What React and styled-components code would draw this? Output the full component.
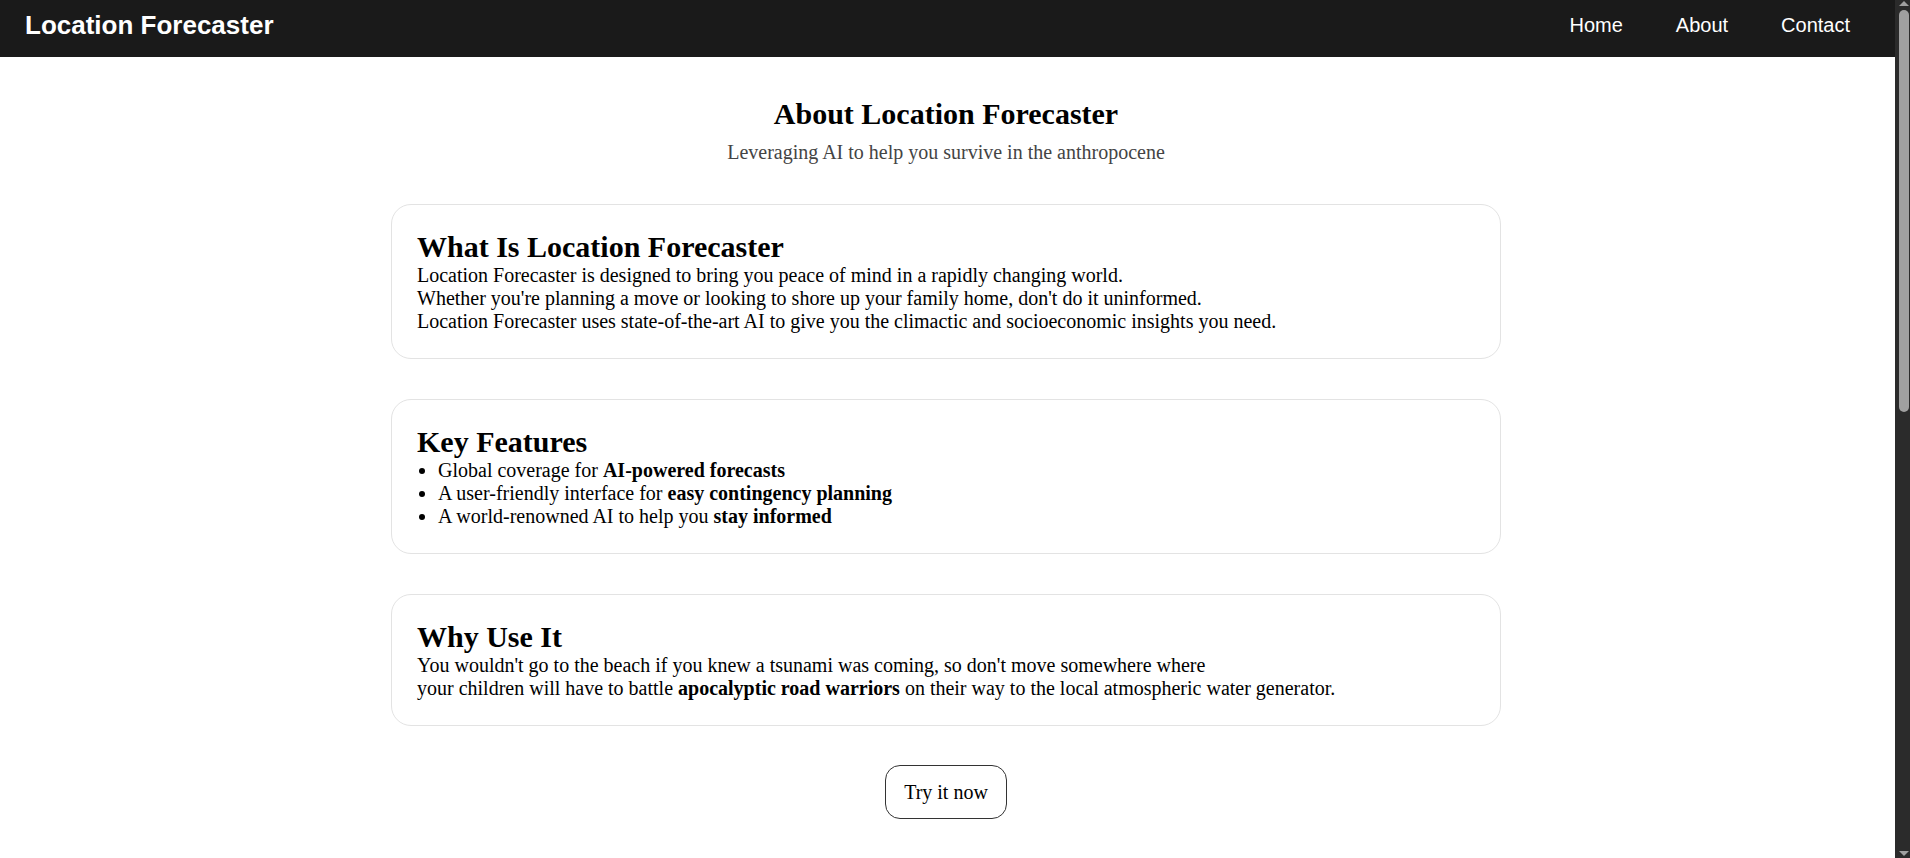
import React from 'react';
import styled, { createGlobalStyle } from 'styled-components';

const GlobalStyle = createGlobalStyle`
  html, body {
    margin: 0;
    height: 100%;
    overflow: hidden;
  }

  body {
    background: #ffffff;
    color: #000000;
    font-family: "Liberation Serif", "Times New Roman", serif;
  }
`;

const Shell = styled.div`
  display: flex;
  height: 100vh;
`;

const Page = styled.div`
  flex: 1;
  min-width: 0;
  min-height: 1767px;
  background: #ffffff;
`;

// dark window scrollbar seen at the right edge of the screenshot
const ScrollTrack = styled.div`
  position: relative;
  flex: 0 0 15px;
  height: 100vh;
  background: #2b2b2b;
`;

const ScrollThumb = styled.div`
  position: absolute;
  top: 10px;
  left: 4px;
  width: 10px;
  height: 402px;
  border-radius: 5px;
  background: #a0a0a0;
`;

const ScrollArrow = styled.div`
  position: absolute;
  left: 4px;
  width: 0;
  height: 0;
  border-left: 5px solid transparent;
  border-right: 5px solid transparent;
  ${(p) =>
    p.down
      ? 'bottom: 2px; border-top: 5px solid #a0a0a0;'
      : 'top: 1px; border-bottom: 5px solid #a0a0a0;'}
`;

const NavBar = styled.nav`
  display: flex;
  justify-content: space-between;
  align-items: center;
  height: 57px;
  box-sizing: border-box;
  padding: 0 45px 6px 25px;
  background: #1a1a1a;
  font-family: "Liberation Sans", Arial, sans-serif;
`;

const Brand = styled.div`
  color: #ffffff;
  font-size: 26px;
  font-weight: 700;
`;

const NavLinks = styled.div`
  display: flex;
  gap: 53px;
`;

const NavLink = styled.a`
  color: #ffffff;
  font-size: 20px;
  text-decoration: none;
  cursor: pointer;
`;

const Main = styled.main`
  display: flex;
  flex-direction: column;
  align-items: center;
  padding: 40px 3px 0 0;
`;

const Title = styled.h1`
  margin: 0;
  font-size: 30px;
  font-weight: 700;
  line-height: normal;
`;

const Subtitle = styled.p`
  margin: 10px 0 40px;
  font-size: 20px;
  color: #444444;
`;

const Sections = styled.div`
  display: flex;
  flex-direction: column;
  gap: 40px;
  width: 1110px;
`;

const Card = styled.section`
  box-sizing: border-box;
  width: 100%;
  padding: 25px;
  border: 1px solid #e3e3e3;
  border-radius: 20px;
  background: #ffffff;
`;

const CardTitle = styled.h2`
  margin: 0;
  font-size: 30px;
  font-weight: 700;
  line-height: normal;
`;

const CardText = styled.p`
  margin: 0;
  font-size: 20px;
  line-height: normal;
`;

const FeatureList = styled.ul`
  margin: 0;
  padding-left: 21px;
  font-size: 20px;
  line-height: normal;
`;

const TryButton = styled.button`
  margin-top: 39px;
  padding: 14.5px 18.5px;
  border: 1.5px solid #333333;
  border-radius: 15px;
  background: #ffffff;
  color: #000000;
  font-family: "Liberation Serif", "Times New Roman", serif;
  font-size: 20px;
  line-height: normal;
  cursor: pointer;
`;

const features = [
  { text: 'Global coverage for ', bold: 'AI-powered forecasts' },
  { text: 'A user-friendly interface for ', bold: 'easy contingency planning' },
  { text: 'A world-renowned AI to help you ', bold: 'stay informed' },
];

const App = () => {
  return (
    <Shell>
      <GlobalStyle />
      <Page>
        <NavBar>
          <Brand>Location Forecaster</Brand>
          <NavLinks>
            <NavLink>Home</NavLink>
            <NavLink>About</NavLink>
            <NavLink>Contact</NavLink>
          </NavLinks>
        </NavBar>

        <Main>
          <Title>About Location Forecaster</Title>
          <Subtitle>Leveraging AI to help you survive in the anthropocene</Subtitle>

          <Sections>
            <Card>
              <CardTitle>What Is Location Forecaster</CardTitle>
              <CardText>
                Location Forecaster is designed to bring you peace of mind in a rapidly changing world.
                <br />
                Whether you're planning a move or looking to shore up your family home, don't do it uninformed.
                <br />
                Location Forecaster uses state-of-the-art AI to give you the climactic and socioeconomic insights you need.
              </CardText>
            </Card>

            <Card>
              <CardTitle>Key Features</CardTitle>
              <FeatureList>
                {features.map((f) => (
                  <li key={f.bold}>
                    {f.text}
                    <strong>{f.bold}</strong>
                  </li>
                ))}
              </FeatureList>
            </Card>

            <Card>
              <CardTitle>Why Use It</CardTitle>
              <CardText>
                You wouldn't go to the beach if you knew a tsunami was coming, so don't move somewhere where
                <br />
                your children will have to battle <strong>apocalyptic road warriors</strong> on their way to the local atmospheric water generator.
              </CardText>
            </Card>
          </Sections>

          <TryButton>Try it now</TryButton>
        </Main>
      </Page>

      <ScrollTrack>
        <ScrollArrow />
        <ScrollThumb />
        <ScrollArrow down />
      </ScrollTrack>
    </Shell>
  );
};

export default App;
